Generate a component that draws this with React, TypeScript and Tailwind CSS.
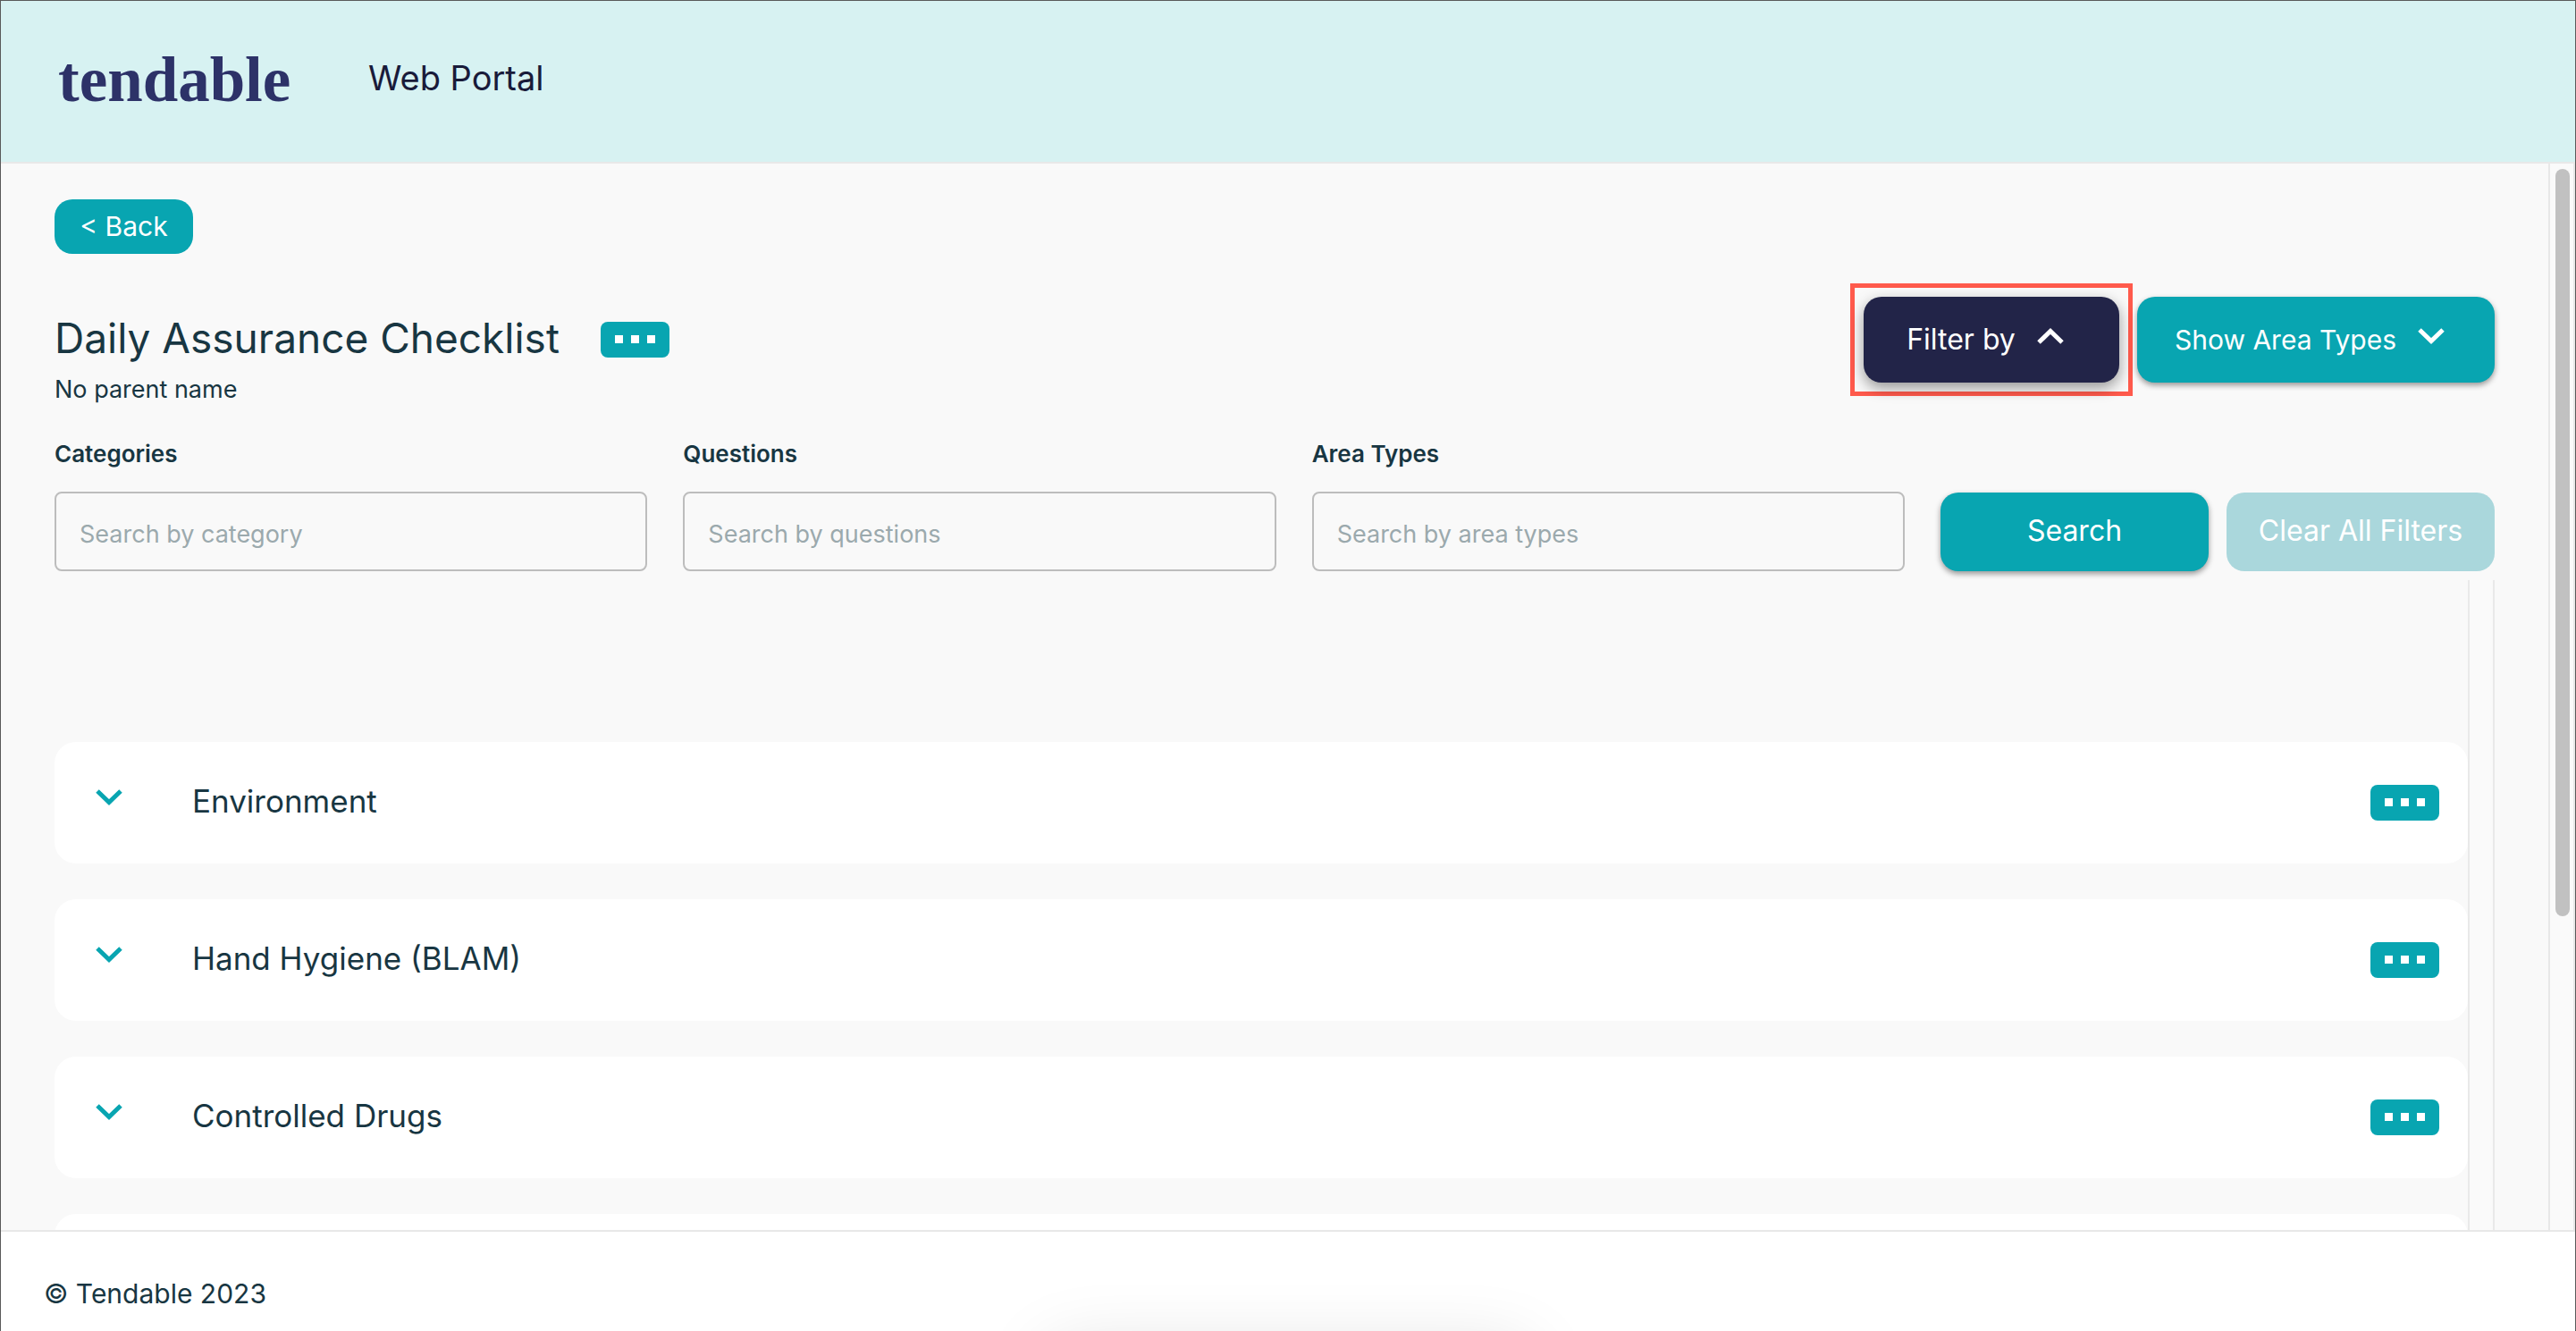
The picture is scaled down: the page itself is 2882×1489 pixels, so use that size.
const sections = ['Environment', 'Hand Hygiene (BLAM)', 'Controlled Drugs'];

const filters = [
  { id: 'categories', label: 'Categories', placeholder: 'Search by category' },
  { id: 'questions', label: 'Questions', placeholder: 'Search by questions' },
  { id: 'area-types', label: 'Area Types', placeholder: 'Search by area types' },
];

function Chevron({ up = false }: { up?: boolean }) {
  return (
    <svg viewBox="0 0 30 18" className="h-[18px] w-[30px] shrink-0" fill="none" stroke="currentColor" strokeWidth="5" aria-hidden="true">
      <path d={up ? 'M2 16 15 3.5 28 16' : 'M2 2 15 14.5 28 2'} />
    </svg>
  );
}

function MoreButton({ label }: { label: string }) {
  return (
    <button type="button" aria-label={label} className="flex h-10 w-[77px] shrink-0 items-center justify-center gap-[9px] rounded-lg bg-[#08a5b1] pb-[2px]">
      <span className="size-[9px] bg-white" />
      <span className="size-[9px] bg-white" />
      <span className="size-[9px] bg-white" />
    </button>
  );
}

export default function App() {
  return (
    <div className="flex h-screen flex-col overflow-hidden border-x border-t border-[#5a5a5a] bg-white font-['Inter',sans-serif] text-[#183642]">
      <header className="flex h-[182px] shrink-0 items-start border-b-2 border-[#e8e8e8] bg-[#d7f2f2] pt-[46px] pl-16">
        <a href="#" className="w-[347px] font-['Liberation_Serif',serif] text-[71px] leading-[84px] font-bold text-[#2d3268]">
          tendable
        </a>
        <span className="text-[38px] leading-[80px] text-[#191b3a]">Web Portal</span>
      </header>

      <main className="flex min-h-0 flex-1 bg-[#f9f9f9]">
        <div className="flex min-w-0 flex-1 flex-col pt-10 pr-[60px] pl-[60px]">
          <div>
            <button type="button" className="h-[61px] w-[155px] rounded-[20px] bg-[#08a5b1] text-[30px] text-white">
              &lt; Back
            </button>
          </div>

          <div className="mt-[33px] flex items-start justify-between">
            <div>
              <div className="mt-[31px] flex h-16 items-center gap-[46px]">
                <h1 className="pb-1 text-[46px] leading-[60px]">Daily Assurance Checklist</h1>
                <MoreButton label="Checklist options" />
              </div>
              <p className="mt-2 text-[27px] leading-[32px]">No parent name</p>
            </div>
            <div className="flex items-center gap-[5px]">
              <div className="border-[5px] border-[#ff5a4c] p-[10px]">
                <button type="button" className="flex h-24 w-[286px] items-center justify-center gap-6 rounded-[20px] bg-[#222448] pr-[14px] text-[32px] text-white shadow-[0_6px_16px_rgba(0,0,0,0.4)]">
                  Filter by
                  <span className="pb-2">
                    <Chevron up />
                  </span>
                </button>
              </div>
              <button type="button" className="flex h-24 w-[400px] items-center justify-center gap-6 rounded-[20px] bg-[#08a5b1] pr-[14px] text-[30px] text-white shadow-[0_3px_6px_rgba(0,0,0,0.4)]">
                Show Area Types
                <span className="pb-2">
                  <Chevron />
                </span>
              </button>
            </div>
          </div>

          <form className="mt-10 flex items-end gap-10">
            {filters.map((f) => (
              <div key={f.id} className="flex min-w-0 flex-1 flex-col">
                <label htmlFor={f.id} className="text-[26px] leading-[32px] font-semibold">{f.label}</label>
                <input
                  id={f.id}
                  type="text"
                  placeholder={f.placeholder}
                  className="mt-[26px] h-[89px] w-full rounded-lg border-2 border-[#bdbdbd] bg-transparent px-[26px] pt-[6px] text-[27px] placeholder:text-[#9ba9ad]"
                />
              </div>
            ))}
            <div className="flex gap-5">
              <button type="button" className="h-[88px] w-[300px] rounded-[20px] bg-[#08a5b1] pb-[2px] text-[32px] text-white shadow-[0_3px_6px_rgba(0,0,0,0.4)]">
                Search
              </button>
              <button type="button" disabled className="h-[88px] w-[300px] rounded-[20px] bg-[#aad7dc] pb-[2px] text-[32px] text-white">
                Clear All Filters
              </button>
            </div>
          </form>

          <div className="mt-[10px] flex min-h-0 flex-1">
            <ul className="flex min-w-0 flex-1 flex-col gap-10 overflow-hidden pt-[181px]">
              {sections.map((name) => (
                <li key={name} className="flex h-[136px] shrink-0 items-center rounded-3xl bg-white pr-8 pl-[46px]">
                  <button type="button" aria-label={'Expand ' + name} className="mr-[78px] pb-3 text-[#08a5b1]">
                    <Chevron />
                  </button>
                  <span className="flex-1 pb-1 text-[35px]">{name}</span>
                  <MoreButton label={name + ' options'} />
                </li>
              ))}
              <li className="h-[136px] shrink-0 rounded-3xl bg-white" />
            </ul>
            <div className="w-[30px] border-x-2 border-[#e9e9e9] bg-[#fafafa]" />
          </div>
        </div>

        <div className="w-[30px] border-x-2 border-[#e8e8e8] bg-[#fafafa] px-[6px] pt-[6px]">
          <div className="h-[70.4%] w-4 rounded-full bg-[#c1c1c1]" />
        </div>
      </main>

      <footer className="relative flex h-[113px] shrink-0 items-start justify-start overflow-hidden border-t-2 border-[#e8e8e8] bg-white pt-[45px] pl-12">
        <span className="text-[30px] leading-[48px]">© Tendable 2023</span>
        <div className="absolute top-full left-1/2 mt-5 h-20 w-[540px] -translate-x-1/2 rounded-3xl shadow-[0_0_80px_rgba(0,0,0,0.13)]" />
      </footer>
    </div>
  );
}
